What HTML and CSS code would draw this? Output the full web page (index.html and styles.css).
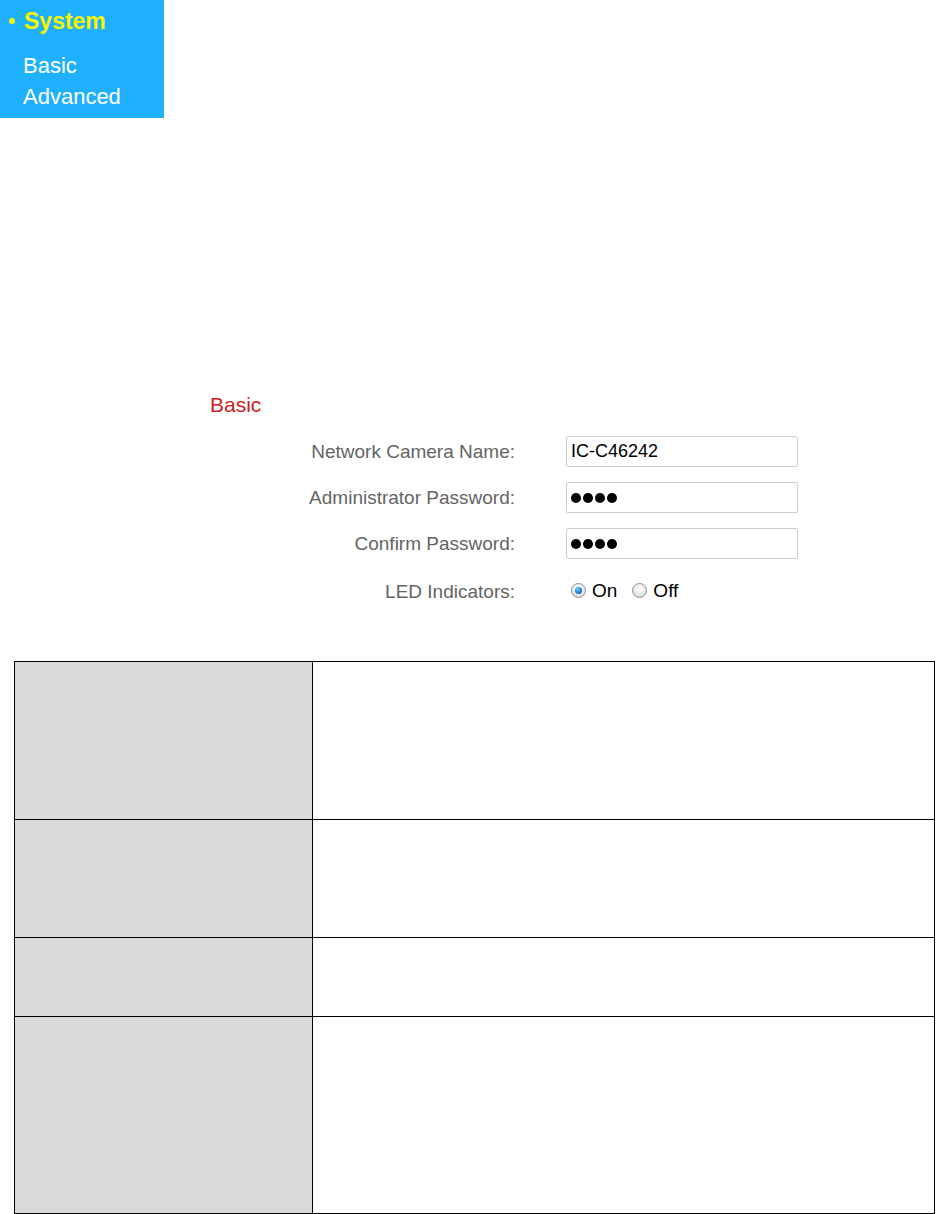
FILE: index.html
```html
<!DOCTYPE html>
<html>
<head>
<meta charset="utf-8">
<link rel="stylesheet" href="styles.css">
</head>
<body>
<div class="menu">
  <div class="menu-title"><span class="bullet"></span><span>System</span></div>
  <div class="menu-item first">Basic</div>
  <div class="menu-item">Advanced</div>
</div>

<div class="section">
  <h2 class="heading">Basic</h2>
  <div class="form">
    <div class="label">Network Camera Name:</div>
    <div class="field"><div class="input">IC-C46242</div></div>
    <div class="label">Administrator Password:</div>
    <div class="field"><div class="input pw"><span class="dot"></span><span class="dot"></span><span class="dot"></span><span class="dot"></span></div></div>
    <div class="label">Confirm Password:</div>
    <div class="field"><div class="input pw"><span class="dot"></span><span class="dot"></span><span class="dot"></span><span class="dot"></span></div></div>
    <div class="label led">LED Indicators:</div>
    <div class="field led radios">
      <span class="radio checked"></span><span class="rlabel">On</span>
      <span class="radio second"></span><span class="rlabel">Off</span>
    </div>
  </div>
</div>

<table class="desc">
  <tr class="r1"><td class="key"></td><td class="val"></td></tr>
  <tr class="r2"><td class="key"></td><td class="val"></td></tr>
  <tr class="r3"><td class="key"></td><td class="val"></td></tr>
  <tr class="r4"><td class="key"></td><td class="val"></td></tr>
</table>
</body>
</html>
```
FILE: styles.css
```css
html, body {
  margin: 0;
  padding: 0;
  background: #ffffff;
  font-family: "Liberation Sans", Arial, sans-serif;
}

.menu {
  width: 164px;
  height: 118px;
  box-sizing: border-box;
  padding-top: 7px;
  background: #1fb1fe;
}

.menu-title {
  display: flex;
  align-items: center;
  height: 28px;
  font-size: 23px;
  font-weight: bold;
  color: #f7f700;
}

.bullet {
  width: 6px;
  height: 6px;
  border-radius: 50%;
  background: #f7f700;
  margin-left: 9px;
  margin-right: 9px;
}

.menu-item {
  padding-left: 23px;
  font-size: 22px;
  line-height: 31px;
  color: #ffffff;
}

.menu-item.first {
  margin-top: 15px;
}

.section {
  margin-top: 275px;
}

.heading {
  margin: 0 0 19px 210px;
  font-size: 21px;
  line-height: 24px;
  font-weight: normal;
  color: #cc1d24;
}

.form {
  display: grid;
  grid-template-columns: 515px 232px;
  grid-auto-rows: 31px;
  column-gap: 51px;
  row-gap: 15px;
}

.label {
  text-align: right;
  font-size: 19px;
  line-height: 31px;
  color: #646464;
  white-space: nowrap;
}

.label.led, .field.led {
  margin-top: 2px;
}

.input {
  box-sizing: border-box;
  height: 31px;
  border: 1px solid #cdcdcd;
  border-radius: 2px;
  padding-left: 4px;
  font-size: 18px;
  line-height: 29px;
  color: #000;
  background: #fff;
}

.input.pw {
  display: flex;
  align-items: center;
  gap: 2px;
  padding-left: 4px;
}

.dot {
  width: 10px;
  height: 10px;
  border-radius: 50%;
  background: #000;
}

.radios {
  display: flex;
  align-items: center;
  font-size: 19px;
  color: #000;
}

.radio {
  box-sizing: border-box;
  width: 15px;
  height: 15px;
  border-radius: 50%;
  border: 1px solid #8e8f8f;
  background: radial-gradient(circle at 50% 35%, #ffffff 0%, #e6e6e6 60%, #d0d0d0 100%);
  margin-left: 5px;
  margin-right: 6px;
  position: relative;
}

.radio.second {
  margin-left: 15px;
}

.radio.checked::after {
  content: "";
  position: absolute;
  left: 3px;
  top: 3px;
  width: 7px;
  height: 7px;
  border-radius: 50%;
  background: radial-gradient(circle at 40% 35%, #7fd0ff 0%, #2a8be0 45%, #0d3c79 100%);
}

.desc {
  margin-top: 56px;
  margin-left: 14px;
  width: 921px;
  border-collapse: collapse;
}

.desc td {
  border: 1px solid #000;
  padding: 0;
}

.desc .key {
  width: 297px;
  background: #d9d9d9;
}

.r1 td { height: 157px; }
.r2 td { height: 117px; }
.r3 td { height: 78px; }
.r4 td { height: 196px; }
```
